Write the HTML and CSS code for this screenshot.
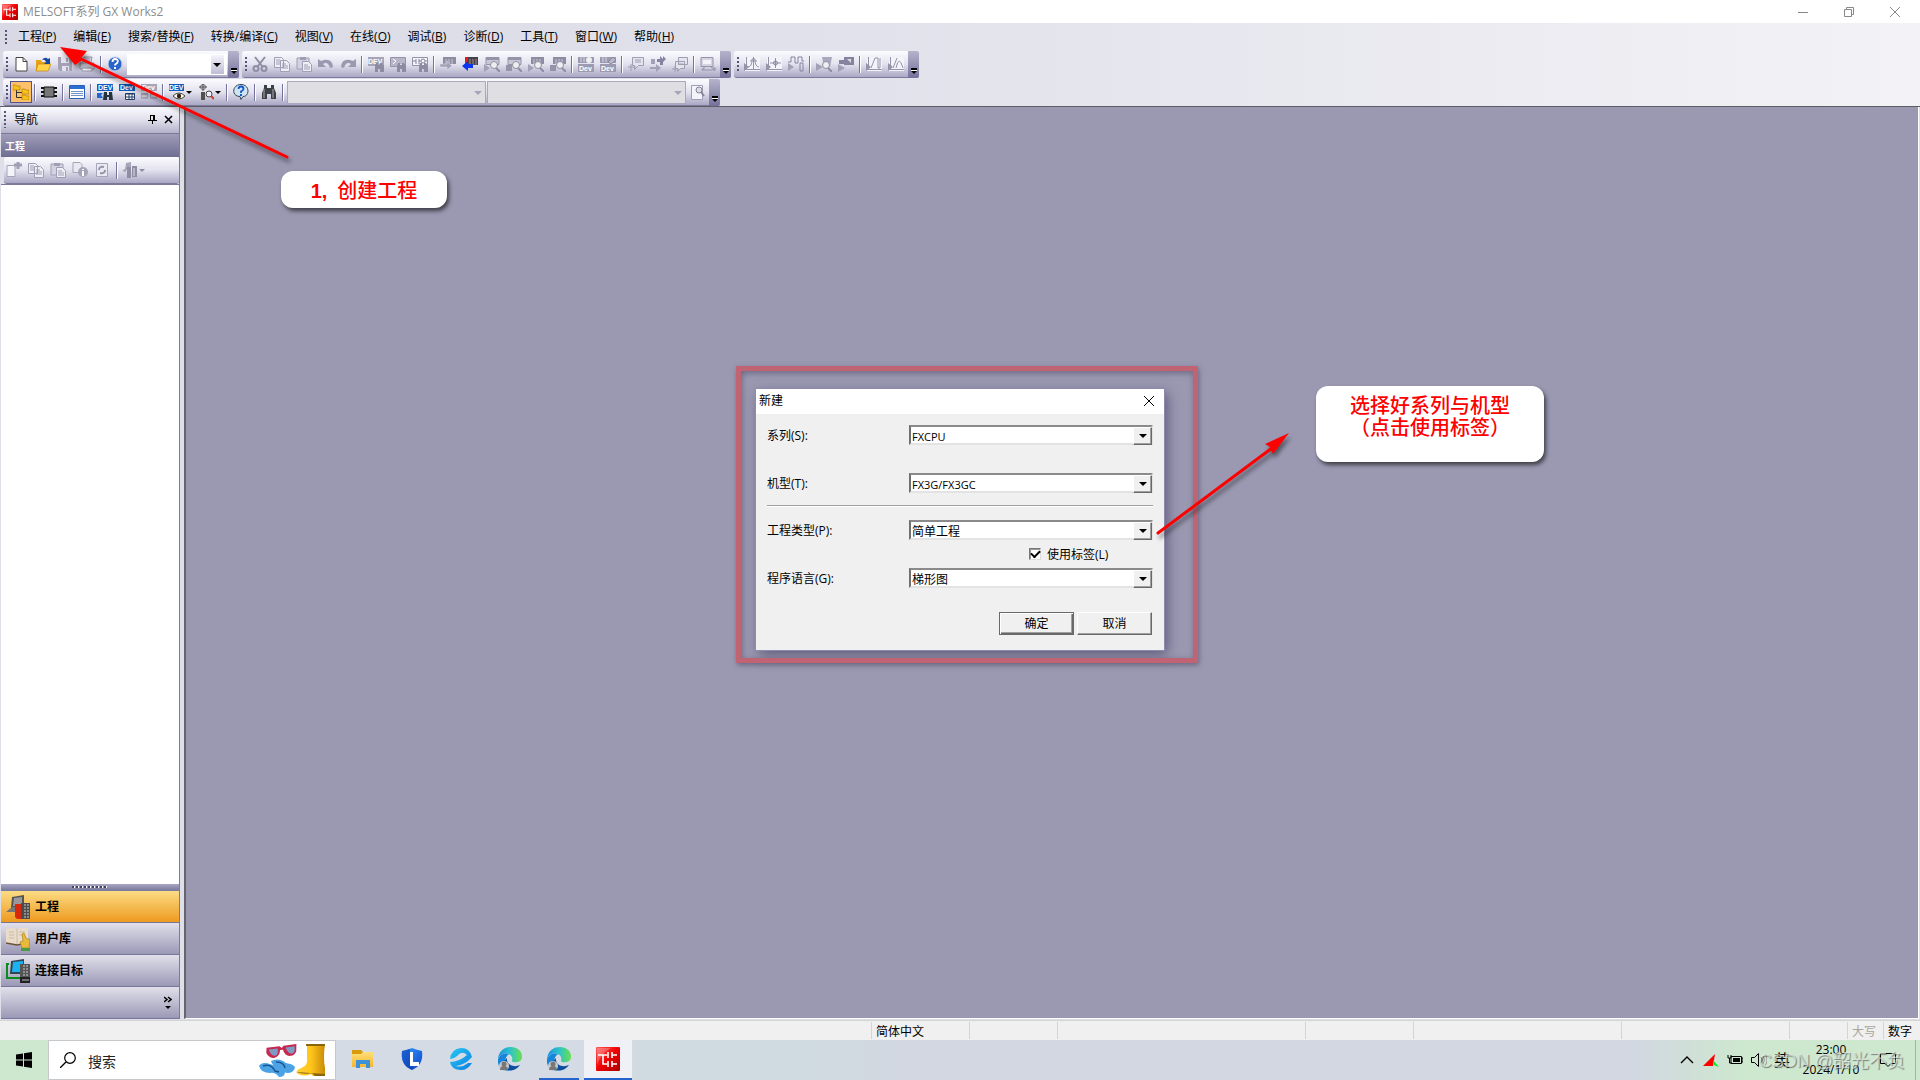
FILE: index.html
```html
<!DOCTYPE html>
<html lang="zh-CN">
<head>
<meta charset="utf-8">
<title>MELSOFT系列 GX Works2</title>
<link rel="stylesheet" href="styles.css">
</head>
<body>
<svg class="defs" aria-hidden="true">
  <defs>
    <linearGradient id="red" x1="0" y1="0" x2="1" y2="1"><stop offset="0" stop-color="#ff5a5a"/><stop offset=".5" stop-color="#f00000"/><stop offset="1" stop-color="#a80000"/></linearGradient>
    <linearGradient id="gold" x1="0" y1="0" x2="0" y2="1"><stop offset="0" stop-color="#ffe07a"/><stop offset="1" stop-color="#f5b52a"/></linearGradient>
    <linearGradient id="blue" x1="0" y1="0" x2="1" y2="1"><stop offset="0" stop-color="#3aa0ff"/><stop offset="1" stop-color="#0a3fc8"/></linearGradient>
    <linearGradient id="cyan" x1="0" y1="0" x2="1" y2="1"><stop offset="0" stop-color="#27c8f5"/><stop offset="1" stop-color="#0e7fe0"/></linearGradient>
    <linearGradient id="edge" x1="0" y1="0" x2="1" y2="0"><stop offset="0" stop-color="#1c8fe0"/><stop offset=".5" stop-color="#2cc3c9"/><stop offset="1" stop-color="#6be04e"/></linearGradient>
    <linearGradient id="boot" x1="0" y1="0" x2="1" y2="0"><stop offset="0" stop-color="#ffd23a"/><stop offset=".5" stop-color="#ffc61a"/><stop offset="1" stop-color="#c98a08"/></linearGradient>
  </defs>
  <symbol id="app" viewBox="0 0 24 24"><rect width="24" height="24" rx="1" fill="url(#red)"/><path d="M1 1h14Q4 7 1 18z" fill="#fff" opacity=".25"/><path d="M2 8h9M7 8v9h4M12 5v6M12 14v6M16 5v6M16 14v6M16 8h5M16 17h5" stroke="#fff" stroke-width="1.600" fill="none"/></symbol>
  <symbol id="new" viewBox="0 0 16 16"><path d="M3 1.500h7l4 4v9.500H3z" fill="#fff" stroke="#444"/><path d="M10 1.500v4h4" fill="none" stroke="#444"/></symbol>
  <symbol id="open" viewBox="0 0 16 16"><path d="M1 4h5l1 2h6v8H1z" fill="#e8a018"/><path d="M3 8h13l-3 7H1z" fill="#ffd24a" stroke="#c98208" stroke-width=".7"/><path d="M7 4q3-4 6-1l2-1v6h-6l2-2q-1-3-4-2z" fill="#174a9c"/></symbol>
  <symbol id="save" viewBox="0 0 16 16"><path d="M1 1h14v14H3l-2-2z" fill="#a3a1b7"/><path d="M4 1h8v6H4zM5 10h7v5H5z" fill="#e3e2ed"/><path d="M9 11h2v4H9zM9 2h2v4H9z" fill="#a3a1b7"/></symbol>
  <symbol id="print" viewBox="0 0 16 16"><path d="M4 6l1-5h8l-1 5M1 7h14v6H1z" fill="#d5d4e0" stroke="#9593aa"/><path d="M3 12h10v3H3zM6 3h5M5 5h6" fill="#eee" stroke="#9593aa"/></symbol>
  <symbol id="help" viewBox="0 0 16 16"><circle cx="8" cy="8" r="7" fill="#2c65c9" stroke="#c5d4ee"/><path d="M5.500 6q0-3 2.700-3t2.600 2.500q0 1.500-2.600 3v1" fill="none" stroke="#fff" stroke-width="1.800"/><path d="M7 11h2v2H7z" fill="#fff"/></symbol>
  <symbol id="cut" viewBox="0 0 16 16"><path d="M3 1l7 9M13 1l-7 9" stroke="#8f8da3" stroke-width="2"/><circle cx="4" cy="12.500" r="2.500" fill="none" stroke="#8f8da3" stroke-width="2"/><circle cx="12" cy="12.500" r="2.500" fill="none" stroke="#8f8da3" stroke-width="2"/></symbol>
  <symbol id="copy" viewBox="0 0 16 16"><path d="M.5 1.500h7l2 2v8h-9zM6.500 4.500h6l3 3v8h-9z" fill="#eeeef5" stroke="#a09eb4"/><path d="M2 4h4M2 6h4M2 8h4M8 8h4M8 10h6M8 12h6" stroke="#a09eb4"/></symbol>
  <symbol id="paste" viewBox="0 0 16 16"><path d="M1 2h12v11H1z" fill="#d3d2df" stroke="#a09eb4"/><path d="M4 1h6v3H4z" fill="#a09eb4"/><path d="M6.500 5.500h6l3 3v7h-9z" fill="#eeeef5" stroke="#a09eb4"/><path d="M8 9h4M8 11h6M8 13h6" stroke="#a09eb4"/></symbol>
  <symbol id="undo" viewBox="0 0 16 16"><path d="M0 3v8h8L5 8q5-3 7 4l3-1Q14 1 3 5z" fill="#9b99b0"/></symbol>
  <symbol id="redo" viewBox="0 0 16 16"><path d="M16 3v8H8l3-3Q6 5 4 12l-3-1Q2 1 13 5z" fill="#9b99b0"/></symbol>
  <symbol id="binos" viewBox="0 0 16 16"><path d="M3 1h3v3h4V1h3v3l2 5v6h-5v-5H6v5H1V9l2-5z" fill="#3c4044"/><path d="M3 5v9M12 5v9" stroke="#a9adb0"/></symbol>
  <symbol id="gbin" viewBox="0 0 16 16"><path d="M8 7h2v2h2V7h2l2 3v6h-4v-3h-2v3H7v-6z" fill="#8d8ba2"/></symbol>
  <symbol id="gfind" viewBox="0 0 16 16"><path d="M0 1h16v9H0z" fill="#a6a4b9"/><text x="0" y="8" class="dev" fill="#fff">DEV</text><use href="#gbin"/></symbol>
  <symbol id="gcmd" viewBox="0 0 16 16"><path d="M.5 1.500h15v9H.5z" fill="#b8b6c8" stroke="#9593aa"/><path d="M3 3l3 2-3 3M8 9h5" stroke="#fff" fill="none"/><use href="#gbin"/></symbol>
  <symbol id="gcontact" viewBox="0 0 16 16"><path d="M.5 1.500h15v8H.5z" fill="#f5f5fa" stroke="#9593aa"/><path d="M1 5h3M4 3v5M7 3v5M7 5h2M15 5h-2" stroke="#8583a0"/><circle cx="11" cy="5" r="2" fill="none" stroke="#8583a0"/><use href="#gbin"/></symbol>
  <symbol id="plc" viewBox="0 0 16 16"><path d="M3 1h13v7H3z" fill="#8e8ca3"/><path d="M6 3v5M9 3v5M12 3v5" stroke="#c9c8d5"/></symbol>
  <symbol id="write" viewBox="0 0 16 16"><use href="#plc"/><path d="M0 8h7V5l5 5-5 4v-3H0z" fill="#a3a1b7" stroke="#e3e2ec" stroke-width=".5"/></symbol>
  <symbol id="read" viewBox="0 0 16 16"><path d="M3 1h13v8H3z" fill="#464049"/><path d="M3 1h3v6H3z" fill="#e21b1b"/><path d="M8 3v6M11 3v6M14 3v6" stroke="#a09090"/><path d="M0 10l6-5v3h5v4H6v3z" fill="#0a36f0"/></symbol>
  <symbol id="lens" viewBox="0 0 16 16"><circle cx="10" cy="9" r="3.500" fill="#eee" stroke="#8f8da4"/><path d="M12 12l4 4" stroke="#8f8da4" stroke-width="2"/></symbol>
  <symbol id="monA" viewBox="0 0 16 16"><path d="M2 1.500h13v7H2z" fill="#c8c7d4" stroke="#9593aa"/><path d="M2 3h13" stroke="#9593aa" stroke-width="2"/><path d="M0 8l6 4-6 4z" fill="#a3a1b7"/><use href="#lens"/></symbol>
  <symbol id="monB" viewBox="0 0 16 16"><path d="M2 1.500h13v7H2z" fill="#c8c7d4" stroke="#9593aa"/><path d="M2 3h13" stroke="#9593aa" stroke-width="2"/><path d="M0 9h6v6H0z" fill="#9593aa"/><use href="#lens"/></symbol>
  <symbol id="monC" viewBox="0 0 16 16"><use href="#plc"/><path d="M0 8l6 4-6 4z" fill="#a3a1b7"/><use href="#lens"/></symbol>
  <symbol id="monD" viewBox="0 0 16 16"><use href="#plc"/><path d="M0 9h6v6H0z" fill="#9593aa"/><use href="#lens"/></symbol>
  <symbol id="devmon" viewBox="0 0 16 16"><path d="M0 1h16v6H0zM0 8h16v8H0z" fill="#9c9ab0"/><path d="M3 1v5M6 1v5" stroke="#d6d5e0"/><circle cx="11" cy="4" r="3" fill="#eee"/><text x="1" y="15" class="dev" fill="#fff">Dev</text></symbol>
  <symbol id="devpen" viewBox="0 0 16 16"><path d="M0 1h16v6H0zM0 8h16v8H0z" fill="#9c9ab0"/><path d="M3 1v5M6 1v5" stroke="#d6d5e0"/><path d="M8 6l5-5 3 3-5 4z" fill="#b9b7c8" stroke="#8886a0"/><text x="1" y="15" class="dev" fill="#fff">Dev</text></symbol>
  <symbol id="note" viewBox="0 0 16 16"><path d="M4.500 1.500h11v8h-5l-4 4v-4h-2z" fill="#e5e4ee" stroke="#9f9db2"/><path d="M7 4h6M7 6h6M0 11h8M3 8v7" stroke="#9f9db2"/></symbol>
  <symbol id="transfer" viewBox="0 0 16 16"><path d="M1 3h4v5H1zM0 11h6V8l5 4-5 4v-3H0z" fill="#a3a1b7"/><path d="M7 3h3V0l3 3V0l3 3-3 3v3h-3V6H7z" fill="#8583a0"/></symbol>
  <symbol id="notes" viewBox="0 0 16 16"><path d="M6.500 1.500h9v7h-9zM3.500 5.500h9v7h-4l-3 3v-3h-2z" fill="#e5e4ee" stroke="#9f9db2"/><path d="M6 8h5M0 13h7M3 10v6" stroke="#9f9db2"/></symbol>
  <symbol id="pc" viewBox="0 0 16 16"><path d="M1 1.500h12v9H1z" fill="#d5d4e0" stroke="#9593aa"/><path d="M3 4h8v4H3z" fill="#f3f3f9"/><path d="M4 11v2H2v1h10M11 11l4 4" stroke="#9593aa" fill="none"/><circle cx="14" cy="13" r="2" fill="#a3a1b7"/></symbol>
  <symbol id="plotA" viewBox="0 0 16 16"><path d="M1 1h15v14H1z" fill="#f3f3fa"/><path d="M2.500 1v13M0 13.500h16M4 11q4 0 4-8h3q0 8 4 8M6 5h7M9.500 1v13" stroke="#9593aa" fill="none"/><path d="M0 7l5 4-5 4z" fill="#9593aa"/></symbol>
  <symbol id="plotB" viewBox="0 0 16 16"><path d="M1 1h15v14H1z" fill="#f3f3fa"/><path d="M2.500 1v13M0 13.500h16M4 7h11M9.500 2v10" stroke="#9593aa"/><circle cx="9.500" cy="7" r="2" fill="none" stroke="#8886a0"/><path d="M0 7l5 4-5 4z" fill="#9593aa"/></symbol>
  <symbol id="pulse" viewBox="0 0 16 16"><path d="M0 6h3V1h4v6h3V1h4v4h2M12 7h3v8h-3z" fill="none" stroke="#8583a0"/><path d="M0 7l6 4-6 4z" fill="#a3a1b7"/></symbol>
  <symbol id="tplc" viewBox="0 0 16 16"><path d="M6 1h10l-2 10H8z" fill="#aaa8bc"/><use href="#lens"/><path d="M0 7l7 4-7 4z" fill="#a3a1b7"/></symbol>
  <symbol id="tmon" viewBox="0 0 16 16"><path d="M6 1h10v8H6zM1 4h6v4H1z" fill="#8583a0"/><path d="M9 3h4v4z" fill="#ddd"/><path d="M0 8l7 4-7 4z" fill="#a3a1b7"/></symbol>
  <symbol id="plotC" viewBox="0 0 16 16"><path d="M1 1h15v14H1z" fill="#f3f3fa"/><path d="M2.500 1v13M0 13.500h16M5 12L9 2h3v10h2V2" stroke="#9593aa" fill="none"/><path d="M0 7l5 4-5 4z" fill="#9593aa"/></symbol>
  <symbol id="plotD" viewBox="0 0 16 16"><path d="M1 1h15v14H1z" fill="#f3f3fa"/><path d="M2.500 1v13M0 13.500h16M5 12L9 2M8 12q3-14 7 0" stroke="#9593aa" fill="none"/><path d="M0 7l5 4-5 4z" fill="#9593aa"/></symbol>
  <symbol id="tree" viewBox="0 0 16 16"><path d="M3.500 5v8.500H9M3.500 8.500H9" fill="none" stroke="#333"/><path d="M0 1h3l1 1h3v4H0zM9 5h3l1 1h3v4H9zM9 11h3l1 1h3v4H9z" fill="#f7c21c" stroke="#a87408" stroke-width=".6"/></symbol>
  <symbol id="chip" viewBox="0 0 16 16"><path d="M3 3h10v10H3z" fill="#777" stroke="#111"/><path d="M0 4h3M0 8h3M0 12h3M13 4h3M13 8h3M13 12h3" stroke="#111" stroke-width="2"/></symbol>
  <symbol id="list" viewBox="0 0 16 16"><path d="M.5 1.500h15v13H.5z" fill="#fff" stroke="#2b60b8"/><path d="M1 2h14v3H1z" fill="#2b6fd0"/><path d="M2 7.500h12M2 9.500h12M2 11.500h12" stroke="#7090c8"/></symbol>
  <symbol id="devfind" viewBox="0 0 16 16"><path d="M0 0h16v7H0z" fill="#0d5cbf"/><text x="1" y="6" class="dev" fill="#fff">DEV</text><path d="M0 9h6l-2 2 2 3H0z" fill="#1f66d0"/><path d="M7 8h3v3h2V8h3l1 8h-4v-3h-2v3H6z" fill="#26333f"/></symbol>
  <symbol id="devtab" viewBox="0 0 16 16"><path d="M0 0h16v7H0z" fill="#0d5cbf"/><text x="1" y="6" class="dev" fill="#fff">Dev</text><path d="M6.500 9.500h9v6h-9z" fill="#fff" stroke="#223a66"/><path d="M7 10h9M7 13h9M10 10v5M13 10v5" stroke="#223a66"/></symbol>
  <symbol id="devoff" viewBox="0 0 16 16"><path d="M0 0h16v7H0zM0 9h7v6H0zM9 9h7v6H9z" fill="#a6a4b9"/><text x="1" y="6" class="dev" fill="#fff">Dev</text><path d="M1 12h5M10 12h5" stroke="#eee"/></symbol>
  <symbol id="deveye" viewBox="0 0 16 16"><path d="M0 0h15v7H0z" fill="#0d5cbf"/><text x="0" y="6" class="dev" fill="#fff">DEV</text><path d="M4 12q6-6 12 0-6 6-12 0z" fill="#fff" stroke="#443"/><circle cx="10" cy="12" r="2.200" fill="#321"/></symbol>
  <symbol id="probe" viewBox="0 0 16 16"><path d="M5 0v7M1 3h8" stroke="#444"/><circle cx="5" cy="3" r="2.500" fill="none" stroke="#666"/><path d="M3 8h4v8H3z" fill="#55504c"/><circle cx="11" cy="10" r="3" fill="#eef" stroke="#444"/><path d="M13 12l3 3" stroke="#d32" stroke-width="2"/></symbol>
  <symbol id="bubble" viewBox="0 0 16 16"><path d="M8 .5c9 0 9 12 2 12l-2 3-1-3c-9 0-8-12 1-12z" fill="#cfe5f6" stroke="#345"/><path d="M5.500 5q0-2.500 2.500-2.500T10.500 5q0 1-2.500 2.500V9" fill="none" stroke="#1559c8" stroke-width="1.800"/><path d="M7 10h2v2H7z" fill="#1559c8"/></symbol>
  <symbol id="pagefind" viewBox="0 0 16 16"><path d="M2.500 1.500h11v14h-11z" fill="#f3f3fa" stroke="#a09eb4"/><circle cx="10" cy="6" r="3" fill="#ddd" stroke="#8583a0"/><path d="M12 8l3 4" stroke="#8583a0" stroke-width="2"/></symbol>
  <symbol id="nnew" viewBox="0 0 16 16"><path d="M1 3.500h8v11H1z" fill="#f3f3fa" stroke="#a6a4b8"/><path d="M8 3h8M12 0v7" stroke="#a09eb4" stroke-width="3"/></symbol>
  <symbol id="ninfo" viewBox="0 0 16 16"><path d="M1 .5h7l2 2v8H1z" fill="#e9e9f2" stroke="#a6a4b8"/><circle cx="11" cy="10" r="5" fill="#a6a4b8"/><path d="M11 7v1M11 9v5" stroke="#fff" stroke-width="2"/></symbol>
  <symbol id="nref" viewBox="0 0 16 16"><path d="M2.500 1.500h11v13h-11z" fill="#e9e9f2" stroke="#a6a4b8"/><path d="M5 8q0-4 5-3M11 8q0 4-5 3" fill="none" stroke="#9593aa" stroke-width="2"/></symbol>
  <symbol id="nsort" viewBox="0 0 16 16"><path d="M4 1l5-1v8H3zM0 9l4-3v4z" fill="#a6a4b9"/><path d="M5 5h4v11H5zM10 4h5v11h-5z" fill="#8f8da4"/><path d="M12 6v8" stroke="#ddd"/></symbol>
  <symbol id="edgei" viewBox="0 0 24 24"><path d="M0 12C1 3 7 0 13 0c8 0 12 6 11 11-1 4-5 5-9 4-2-1 0-2-1-5C12 5 3 5 0 12z" fill="url(#edge)"/><path d="M0 12q4-7 11-5c-7 5-3 14 3 16C5 26-1 20 0 12z" fill="#1685dc"/><path d="M9 11c-1 7 7 10 13 7q-5 7-12 5c-5-4-5-9-1-12z" fill="#0d4f9e"/><circle cx="6" cy="19" r="5" fill="#c9c9c9"/><circle cx="6" cy="17" r="2.500" fill="#777"/><path d="M2 23q0-4 4-4t4 4z" fill="#777"/></symbol>
</svg>

<header class="titlebar">
  <svg class="logo"><use href="#app"/></svg>
  <h1>MELSOFT系列 GX Works2</h1>
  <div class="winbtns">
    <button aria-label="最小化"><svg viewBox="0 0 10 10"><path d="M0 5.500h10"/></svg></button>
    <button aria-label="还原"><svg viewBox="0 0 10 10"><path d="M.5 2.500h7v7h-7zM2.500 2.500v-2h7v7h-2"/></svg></button>
    <button aria-label="关闭"><svg viewBox="0 0 10 10"><path d="M0 0l10 10M10 0L0 10"/></svg></button>
  </div>
</header>

<div class="bars">
  <nav class="menu grip">
    <a href="#">工程(<u>P</u>)</a><a href="#">编辑(<u>E</u>)</a><a href="#">搜索/替换(<u>F</u>)</a><a href="#">转换/编译(<u>C</u>)</a><a href="#">视图(<u>V</u>)</a><a href="#">在线(<u>O</u>)</a><a href="#">调试(<u>B</u>)</a><a href="#">诊断(<u>D</u>)</a><a href="#">工具(<u>T</u>)</a><a href="#">窗口(<u>W</u>)</a><a href="#">帮助(<u>H</u>)</a>
  </nav>
  <div class="toolrow">
    <div class="tools grip">
      <button aria-label="新建"><svg><use href="#new"/></svg></button><button aria-label="打开"><svg><use href="#open"/></svg></button><button aria-label="保存"><svg><use href="#save"/></svg></button><button aria-label="打印"><svg><use href="#print"/></svg></button><i class="sep"></i><button aria-label="帮助"><svg><use href="#help"/></svg></button>
      <span class="tcombo small"><select aria-label="查找"><option></option></select></span>
      <button class="cap" aria-label="更多"></button>
    </div>
    <div class="tools grip">
      <button aria-label="剪切"><svg><use href="#cut"/></svg></button><button aria-label="复制"><svg><use href="#copy"/></svg></button><button aria-label="粘贴"><svg><use href="#paste"/></svg></button><button aria-label="撤销"><svg><use href="#undo"/></svg></button><button aria-label="恢复"><svg><use href="#redo"/></svg></button><i class="sep"></i><button aria-label="软元件搜索"><svg><use href="#gfind"/></svg></button><button aria-label="指令搜索"><svg><use href="#gcmd"/></svg></button><button aria-label="触点搜索"><svg><use href="#gcontact"/></svg></button><i class="sep"></i><button aria-label="写入"><svg><use href="#write"/></svg></button><button aria-label="读取"><svg><use href="#read"/></svg></button><button aria-label="监视开始"><svg><use href="#monA"/></svg></button><button aria-label="监视停止"><svg><use href="#monB"/></svg></button><button aria-label="全部监视开始"><svg><use href="#monC"/></svg></button><button aria-label="全部监视停止"><svg><use href="#monD"/></svg></button><i class="sep"></i><button aria-label="软元件监视"><svg><use href="#devmon"/></svg></button><button aria-label="软元件更改"><svg><use href="#devpen"/></svg></button><i class="sep"></i><button aria-label="注释"><svg><use href="#note"/></svg></button><button aria-label="转换"><svg><use href="#transfer"/></svg></button><button aria-label="声明"><svg><use href="#notes"/></svg></button><i class="sep"></i><button aria-label="模拟"><svg><use href="#pc"/></svg></button>
      <button class="cap" aria-label="更多"></button>
    </div>
    <div class="tools grip">
      <button aria-label="采样跟踪"><svg><use href="#plotA"/></svg></button><button aria-label="触发"><svg><use href="#plotB"/></svg></button><button aria-label="脉冲"><svg><use href="#pulse"/></svg></button><i class="sep"></i><button aria-label="跟踪监视"><svg><use href="#tplc"/></svg></button><button aria-label="跟踪写入"><svg><use href="#tmon"/></svg></button><i class="sep"></i><button aria-label="曲线一"><svg><use href="#plotC"/></svg></button><button aria-label="曲线二"><svg><use href="#plotD"/></svg></button>
      <button class="cap" aria-label="更多"></button>
    </div>
  </div>
  <div class="toolrow">
    <div class="tools grip">
      <button class="on" aria-label="导航"><svg><use href="#tree"/></svg></button><i class="sep"></i><button aria-label="模块"><svg><use href="#chip"/></svg></button><i class="sep"></i><button aria-label="输出"><svg><use href="#list"/></svg></button><i class="sep"></i><button aria-label="交叉参照"><svg><use href="#devfind"/></svg></button><button aria-label="使用列表"><svg><use href="#devtab"/></svg></button><button aria-label="软元件表"><svg><use href="#devoff"/></svg></button><i class="sep"></i><button class="drop" aria-label="监看"><svg><use href="#deveye"/></svg></button><button class="drop" aria-label="智能模块监视"><svg><use href="#probe"/></svg></button><i class="sep"></i><button aria-label="帮助搜索"><svg><use href="#bubble"/></svg></button><i class="sep"></i><button aria-label="查找"><svg><use href="#binos"/></svg></button><i class="sep"></i>
      <span class="tcombo off"><select aria-label="对象" disabled><option></option></select></span>
      <span class="tcombo off"><select aria-label="范围" disabled><option></option></select></span>
      <button aria-label="页面查找"><svg><use href="#pagefind"/></svg></button>
      <button class="cap" aria-label="更多"></button>
    </div>
  </div>
</div>

<main class="work">
  <aside class="nav">
    <div class="navhead grip"><h2>导航</h2>
      <button aria-label="固定"><svg viewBox="0 0 9 9"><path d="M2 .5h5M2.500 0v5M5.500 0v5M6.500 0v5M0 5.500h9M4.500 6v3"/></svg></button>
      <button aria-label="关闭"><svg viewBox="0 0 9 9"><path d="M1 1l7 7M8 1L1 8" stroke-width="1.500"/></svg></button>
    </div>
    <h3>工程</h3>
    <div class="tools navtools">
      <button aria-label="新建"><svg><use href="#nnew"/></svg></button><button aria-label="复制"><svg><use href="#copy"/></svg></button><button aria-label="粘贴"><svg><use href="#paste"/></svg></button><button aria-label="属性"><svg><use href="#ninfo"/></svg></button><button aria-label="刷新"><svg><use href="#nref"/></svg></button><i class="sep"></i><button class="drop" aria-label="排序"><svg><use href="#nsort"/></svg></button>
    </div>
    <div class="treeview"></div>
    <div class="splitter"></div>
    <button class="navitem active"><svg viewBox="0 0 24 24"><path d="M6 2l12-2v13H5z" fill="#555"/><path d="M8 3l8-1v9H7z" fill="#999"/><path d="M0 17l6-5h8v5z" fill="#777"/><path d="M9 9h6v15h-4l-2-2z" fill="#d8290c"/><path d="M15 8h9v16h-9z" fill="#4c4c4c"/><path d="M19 9v14M22 9v14" stroke="#ccc" stroke-dasharray="2 1"/></svg>工程</button>
    <button class="navitem"><svg viewBox="0 0 24 24"><path d="M0 2q6-2 11 0 5-2 11-1v15l-11 2-11-2z" fill="#e9dccb"/><path d="M0 16l11 2 11-2" fill="none" stroke="#6b5337" stroke-width="1.500"/><path d="M11 2v15M3 5h5M3 8h5M3 11h5M13 5h6M13 8h4" stroke="#cdb9a5"/><path d="M16 7l2-1 2 5 4 2-1 8h-7l-2-6 3-1z" fill="#e8b93a" stroke="#a17a12" stroke-width=".6"/><path d="M15 21h9v3h-9z" fill="#4a9a4a"/></svg>用户库</button>
    <button class="navitem"><svg viewBox="0 0 24 24"><path d="M3 5H1v14h14" fill="none" stroke="#0c8a1a" stroke-width="2"/><path d="M5 2l13-2v15H4z" fill="#345"/><path d="M7 3l10-1v11H6z" fill="#1ab4f0"/><path d="M14 5h10v14H14z" fill="#555"/><path d="M18 6v11M21 6v11" stroke="#ccc" stroke-dasharray="2 1"/><path d="M14 18h10v6H14z" fill="#222"/><path d="M16 21h7" stroke="#bbb"/></svg>连接目标</button>
    <div class="navmore"><button aria-label="配置按钮"><svg viewBox="0 0 8 14"><path d="M0 1l3 2.500L0 6M4 1l3 2.500L4 6" fill="none" stroke="#000" stroke-width="1.500"/><path d="M1 10h6l-3 3z"/></svg></button></div>
  </aside>
  <section class="mdi" aria-label="工作区"></section>
</main>

<footer class="status">
  <span class="fill"></span><span class="c98">简体中文</span><span class="c88"></span><span class="c248"></span><span class="c108"></span><span class="c208"></span><span class="c168"></span><span class="c58"></span><span class="c36 dim">大写</span><span class="c37">数字</span>
</footer>

<div class="taskbar">
  <button class="start" aria-label="开始"><svg viewBox="0 0 16 16"><path d="M0 2.500l7-1v6H0zM8 1.300L16 0v7.500H8zM0 8.500h7v6l-7-1zM8 8.500h8V16l-8-1.300z"/></svg></button>
  <label class="search"><svg class="mag" viewBox="0 0 16 16"><circle cx="10" cy="6" r="5.300" fill="none" stroke="#000" stroke-width="1.200"/><path d="M6 10l-6 6" stroke="#000" stroke-width="1.300"/></svg><input type="text" placeholder="搜索" aria-label="搜索">
    <svg class="art" viewBox="0 0 68 36"><g transform="rotate(-7 22 8)"><path d="M8 4h13l2 2 2-2h13l-1 7q-2 4-6 4-6 0-7-7h-3q-1 7-7 7-5 0-7-6z" fill="#c72850"/><path d="M10 6h9q0 7-4 7-4-1-5-7zM27 6h9q0 7-4 7-4-1-5-7z" fill="#7f9bc4"/></g><path d="M0 24q3-5 11-2 10 3 15 8 0 5-6 5-4-5-9-4Q2 31 0 24zM12 19q8-4 15 2 7 1 9 4-1 6-8 6-6-1-8-5-7-2-8-7z" fill="#4ba3e6"/><path d="M4 24q8-3 12 5l4 1M17 20q8 0 9 6" fill="none" stroke="#17548f" stroke-width="1.500"/><path d="M48 2h18q-2 14 0 24v8H54l-2-2q-7 3-13 0-4-3 3-6 7-3 6-8z" fill="url(#boot)"/><path d="M47 2h19v2H47zM37 30q8 3 16 1l3 3h10v-2" fill="#8a6510"/></svg>
  </label>
  <div class="apps">
    <button aria-label="文件资源管理器"><svg viewBox="0 0 24 24"><path d="M1 3h9l2 2v4H1z" fill="#d99a0b"/><path d="M1 7h9l2-2h10v15H1z" fill="url(#gold)"/><path d="M5 21v-8h14v8h-4v-4H9v4z" fill="#3b92d8"/></svg></button>
    <button aria-label="联想电脑管家"><svg viewBox="0 0 24 24"><path d="M12 1q5 2 10 3 2 14-10 19Q0 18 2 4q5-1 10-3z" fill="url(#blue)"/><path d="M2 4l8-2v16l4 3-2 2Q0 18 2 4z" fill="#0b3bb0" opacity=".6"/><path d="M10 5h3v10h6v4h-9z" fill="#fff"/></svg></button>
    <button aria-label="浏览器"><svg viewBox="0 0 24 24"><path d="M1 12Q2 2 12 1q9 0 11 9-7 8-16 9 6 2 12-3h4q-5 8-12 7Q2 22 1 15q9 0 17-7-5-5-10 1-3 3-7 3z" fill="url(#cyan)"/></svg></button>
    <button aria-label="Edge"><svg><use href="#edgei"/></svg></button>
    <button class="run" aria-label="Edge 窗口"><svg><use href="#edgei"/></svg></button>
    <button class="cur" aria-label="GX Works2"><svg><use href="#app"/></svg></button>
  </div>
  <div class="tray">
    <button aria-label="显示隐藏的图标"><svg viewBox="0 0 16 16"><path d="M2 11l6-6 6 6" fill="none" stroke="#000" stroke-width="1.400"/></svg></button>
    <button aria-label="安全软件"><svg viewBox="0 0 16 16"><path d="M0 14L12 2 10 14z" fill="#f00"/><path d="M10 8l6 7-5-2z" fill="#0e2"/></svg></button>
    <button aria-label="电池"><svg viewBox="0 0 16 16"><path d="M4 4.500h10.500v7H4zM14 6h2v4h-2M1 3v3h3V3M2.500 6v5H5" fill="none" stroke="#000"/><path d="M6 6h7v4H6z"/></svg></button>
    <button aria-label="音量"><svg viewBox="0 0 16 16"><path d="M.5 5.500h3l4-4v13l-4-4h-3zM10 5q2 3 0 6" fill="none" stroke="#000"/><path d="M12 4q3 4 0 8M14 2q4 6 0 12" fill="none" stroke="#999"/></svg></button>
    <button class="ime">英</button>
    <time class="clock"><span>23:00</span><span>2024/1/10</span></time>
    <button class="notice" aria-label="通知"><svg viewBox="0 0 16 16"><path d="M.5 1.500h15v10H11l-3 3-3-3H.5z" fill="none" stroke="#000"/></svg></button>
    <span class="mark">CSDN @韶光不负</span>
  </div>
</div>

<div class="hint">
  <svg class="arrow1" viewBox="0 0 240 130"><path d="M27 19L235 118" stroke="#f00" stroke-width="3" stroke-linecap="round"/><path d="M8 8l27 4-5 6-1 4-6 4z" fill="#f00"/></svg>
  <p class="callout first"><b>1,</b>&ensp;创建工程</p>
</div>

<div class="stage">
  <form class="dialog">
    <header><h2>新建</h2><button type="button" aria-label="关闭"><svg viewBox="0 0 10 10"><path d="M0 0l10 10M10 0L0 10" stroke="#000"/></svg></button></header>
    <div class="row"><label for="series">系列(S):</label><span class="combo"><select id="series" class="latin"><option>FXCPU</option></select></span></div>
    <div class="row second"><label for="model">机型(T):</label><span class="combo"><select id="model" class="latin"><option>FX3G/FX3GC</option></select></span></div>
    <hr>
    <div class="row"><label for="ptype">工程类型(P):</label><span class="combo"><select id="ptype"><option>简单工程</option></select></span></div>
    <div class="check"><input type="checkbox" id="tag" checked><label for="tag">使用标签(L)</label></div>
    <div class="row"><label for="lang">程序语言(G):</label><span class="combo"><select id="lang"><option>梯形图</option></select></span></div>
    <div class="actions"><button type="button" class="ok">确定</button><button type="button">取消</button></div>
  </form>
  <div class="frame"></div>
  <svg class="arrow2" viewBox="0 0 150 120"><path d="M8 113L122 28" stroke="#f00" stroke-width="3" stroke-linecap="round"/><path d="M139 13l-24 11 5 3v1l3 6z" fill="#f00"/></svg>
  <p class="callout second">选择好系列与机型<br>（点击使用标签）</p>
</div>
</body>
</html>
```
FILE: styles.css
```css
* { box-sizing: border-box; margin: 0; }
body {
  height: 100vh; display: flex; flex-direction: column; position: relative; overflow: hidden;
  font: 12px/16px "Open Sans", "Noto Sans CJK SC", sans-serif; color: #000; background: #dcdce8;
}
button, select, input { font: inherit; color: inherit; padding: 0; border: 0; background: none; }
button { display: flex; align-items: center; justify-content: center; }
h1, h2, h3 { font-size: 12px; font-weight: 400; }
.defs { position: absolute; width: 0; height: 0; }
symbol { overflow: visible; }
.dev { font: bold 7px "Liberation Sans", sans-serif; }

.titlebar { display: flex; align-items: center; height: 23px; padding: 0 2px; gap: 5px; background: #fff; color: #8c8c8c; }
.logo { width: 16px; height: 16px; }
.winbtns { display: flex; margin-left: auto; }
.winbtns button { width: 46px; height: 22px; }
.winbtns svg { width: 10px; height: 10px; fill: none; stroke: #888; }

.bars { background: linear-gradient(90deg, #d9d9e6, #e3e3ec 50%, #f3f2f6); border-bottom: 1px solid #5e5d66; }
.grip::before {
  content: ""; width: 2px; height: 15px; margin: 0 2px 0 3px; flex: none;
  background: repeating-linear-gradient(#55537a 0 2px, transparent 2px 4px);
}
.menu { display: flex; align-items: center; height: 28px; gap: 17px; padding: 0 2px; }
.menu::before { margin-right: -6px; }
.menu a { color: #000; text-decoration: none; white-space: nowrap; }
.toolrow { display: flex; gap: 3px; padding-left: 3px; height: 28px; }
.toolrow:last-child { height: 27px; }
.tools {
  display: flex; align-items: center; height: 27px; border-radius: 3px;
  background: linear-gradient(#fbfbff, #e3e2ee 50%, #a9a7c4); border-bottom: 1px solid #7c7a9a;
}
.tools button { width: 22px; height: 22px; flex: none; }
.tools svg { width: 16px; height: 16px; }
.tools .on { background: #fdc06b; border: 1px solid #555389; }
.tools .drop { width: 29px; padding-left: 3px; justify-content: flex-start; }
.drop::after { content: ""; border: 3px solid transparent; border-top-color: currentColor; border-bottom: 0; margin-left: 1px; }
.sep { width: 6px; height: 17px; flex: none; background: linear-gradient(90deg, transparent 2px, #75739a 2px 3px, #fff 3px 4px, transparent 4px); }
.tools .cap {
  position: relative; width: 11px; height: 27px; margin: 0 0 -1px 1px; border-radius: 0 2px 2px 0;
  background: linear-gradient(#b5b3cb, #74729a);
}
.cap::before { content: ""; position: absolute; left: 3px; top: 17px; width: 6px; height: 2px; background: #000; border-bottom: 1px solid #fff; }
.cap::after { content: ""; position: absolute; left: 3px; top: 20px; border: 3px solid transparent; border-top-color: #000; border-bottom: 0; }
.tcombo { position: relative; display: block; height: 21px; width: 100px; margin-left: 1px; background: #fff; }
.tcombo select { appearance: none; width: 100%; height: 100%; }
.tcombo::after { content: ""; position: absolute; right: 7px; top: 9px; border: 4px solid transparent; border-top-color: #000; border-bottom: 0; pointer-events: none; }
.small::before { content: ""; position: absolute; right: 3px; top: 1px; width: 13px; height: 19px; background: linear-gradient(#f4f4fa, #bfbdd3); pointer-events: none; }
.small::after { right: 6px; }
.off { width: 199px; height: 23px; background: #dfdee3; border: 1px solid #aaa8bc; }
.off::after { right: 3px; border-top-color: #a5a3b6; }

.work { flex: 1; min-height: 0; display: flex; gap: 4px; padding: 0 1px 1px; background: #dfdfe9; }
.nav { width: 179px; display: flex; flex-direction: column; border-right: 1px solid #7c7a9a; }
.navhead { display: flex; align-items: center; height: 26px; gap: 7px; padding: 0 6px 1px 0; background: linear-gradient(#fafaff, #e0dfeb 50%, #b3b1ca); }
.navhead::before { height: 17px; margin-right: 1px; }
.navhead h2 { margin-right: auto; }
.navhead svg { width: 9px; height: 9px; fill: none; stroke: #000; }
.nav h3 { height: 24px; padding-left: 4px; line-height: 24px; font-size: 10px; font-weight: 700; color: #fff; background: linear-gradient(#9f9db8, #6f6d92); border-top: 1px solid #7c7a9a; }
.navtools { margin-left: 3px; height: 27px; color: #8f8da4; }
.navtools button { margin-left: -1px; margin-right: 1px; }
.treeview { flex: 1; background: #fff; border-top: 1px solid #7c7a9a; }
.splitter { height: 7px; background: repeating-linear-gradient(90deg, #444266 0 2px, #fff 2px 3px, transparent 3px 4px) center 2px / 36px 2px no-repeat, linear-gradient(#a9a7c2, #77759a); }
.navitem { height: 32px; gap: 5px; padding-left: 5px; justify-content: flex-start; font-weight: 700; border-bottom: 1px solid #77759a; background: linear-gradient(#e1e0ea, #9b99b6); }
.navitem svg { width: 24px; height: 24px; }
.active { background: linear-gradient(#fbdc84, #ee9a20); }
.navmore { height: 32px; display: flex; justify-content: flex-end; align-items: center; padding-right: 7px; background: linear-gradient(#e1e0ea, #9b99b6); border-bottom: 1px solid #77759a; }
.navmore svg { width: 8px; height: 14px; }
.mdi { flex: 1; background: #9b99b2; border-left: 2px solid #66656e; border-bottom: 1px solid #fff; border-right: 1px solid #fff; }

.status { display: flex; height: 20px; padding-top: 1px; padding-bottom: 1px; background: #f0f0f0; border-top: 1px solid #d4d4d4; line-height: 19px; }
.status span { border-left: 1px solid #d4d4d4; padding-left: 4px; flex: none; white-space: nowrap; }
.status .fill { flex: 1; border: 0; }
.c98 { width: 98px; } .c88 { width: 88px; } .c248 { width: 248px; } .c108 { width: 108px; } .c208 { width: 208px; }
.c168 { width: 168px; } .c58 { width: 58px; } .c36 { width: 36px; } .c37 { width: 37px; }
.status .dim { color: #a9a59b; }

.taskbar { display: flex; height: 40px; flex: none; background: linear-gradient(90deg, #cde8cf 0 48px, #d5dbe5 300px 600px, #cfdbe0 650px 800px, #d2d7e1 900px 85%, #cde8cf 91%); }
.start { width: 48px; }
.start svg { width: 16px; height: 16px; }
.search { display: flex; align-items: center; width: 288px; gap: 12px; padding: 0 8px 0 11px; background: #fff; border: 1px solid #c5c9cc; }
.mag { width: 16px; height: 16px; flex: none; }
.search input { flex: 1; min-width: 0; height: 24px; padding-top: 2px; font-size: 14px; outline: 0; }
.search input::placeholder { color: #222; }
.art { width: 68px; height: 36px; flex: none; }
.apps { display: flex; gap: 1px; padding-left: 3px; }
.apps button { width: 48px; border-bottom: 2px solid transparent; }
.apps svg { width: 24px; height: 24px; }
.apps .run { width: 40px; margin: 0 4px; border-color: #2464cc; }
.apps .cur { background: #eff1f6; border-color: #2464cc; }
.tray { position: relative; display: flex; margin-left: auto; margin-right: 4px; padding-right: 8px; border-right: 1px solid #a0b5a2; }
.tray button { width: 24px; }
.tray svg { width: 16px; height: 16px; }
.tray .ime { width: 22px; font-size: 16px; }
.clock { display: flex; flex-direction: column; width: 76px; text-align: center; line-height: 20px; }
.mark { position: absolute; right: 10px; top: 7px; font: 18px/28px "Liberation Sans", "Noto Sans CJK SC", sans-serif; white-space: nowrap; color: rgba(235, 240, 235, .65); text-shadow: 1px 1px 1px rgba(60, 60, 60, .6); pointer-events: none; }
.tray .notice { width: 38px; }

.hint { position: absolute; left: 52px; top: 39px; pointer-events: none; }
.arrow1, .arrow2 { position: absolute; filter: drop-shadow(2px 4px 2px rgba(0, 0, 0, .45)); pointer-events: none; }
.arrow1 { left: 0; top: 0; width: 240px; height: 130px; }
.callout { position: absolute; border-radius: 12px; background: #fff; color: #f00; font: 500 20px/22px "Liberation Sans", "Noto Sans CJK SC", sans-serif; text-align: center; white-space: nowrap; box-shadow: 2px 3px 4px rgba(0, 0, 0, .6); }
.callout.first { left: 229px; top: 132px; width: 166px; padding: 9px 0 6px; }
.stage { position: absolute; left: 50%; top: 50%; margin: -151px 0 0 -204px; }
.callout.second { left: 560px; top: -3px; width: 228px; padding: 9px 0 23px; }
.frame { position: absolute; left: -20px; top: -23px; width: 462px; height: 297px; border: 5px solid #c06474; box-shadow: 1px 2px 5px rgba(60, 50, 80, .5), inset 1px 2px 6px rgba(60, 50, 80, .5); pointer-events: none; }
.arrow2 { left: 394px; top: 31px; width: 150px; height: 120px; }

.dialog { width: 408px; padding-bottom: 15px; background: #f0f0f0; box-shadow: 0 0 0 1px #8d8bad, 3px 4px 12px rgba(30, 20, 60, .5); }
.dialog header { display: flex; justify-content: space-between; align-items: center; height: 25px; padding: 0 10px 2px 3px; margin-bottom: 11px; background: #fff; }
.dialog header svg { width: 10px; height: 10px; }
.row { display: flex; align-items: center; justify-content: space-between; height: 20px; margin: 0 11px; }
.row.second { margin-top: 28px; }
.row label, .check label { padding-top: 2px; }
.dialog hr { height: 2px; border: 0; border-top: 1px solid #a0a0a0; background: #fff; margin: 12px 11px 13px; }
.combo { position: relative; width: 244px; height: 20px; }
.combo select { appearance: none; display: block; width: 100%; height: 100%; padding: 2px 0 0 1px; border: 2px solid; border-color: #8a8a8a #e3e3e3 #e3e3e3 #707070; background: #fff; border-radius: 0; }
.combo .latin { font-size: 11px; }
.combo::before { content: ""; position: absolute; right: 1px; top: 2px; width: 17px; height: 16px; background: #f0f0f0; border: 1px solid; border-color: #fff #696969 #696969 #fff; box-shadow: inset -1px -1px #a0a0a0; pointer-events: none; }
.combo::after { content: ""; position: absolute; right: 6px; top: 9px; border: 4px solid transparent; border-top-color: #000; border-bottom: 0; pointer-events: none; }
.check { display: flex; align-items: center; height: 28px; gap: 6px; margin-left: 273px; }
.check input { appearance: none; width: 12px; height: 12px; background: #fff; border: 1px solid; border-color: #777 #ddd #ddd #777; box-shadow: inset 1px 1px #999; display: grid; place-items: center; }
.check input:checked::before { content: ""; width: 7px; height: 4px; border: solid #000; border-width: 0 0 2px 2px; transform: rotate(-45deg); margin-top: -2px; }
.actions { display: flex; justify-content: flex-end; gap: 3px; margin: 24px 12px 0; }
.actions button { width: 75px; height: 23px; border: 1px solid; border-color: #fff #696969 #696969 #fff; box-shadow: inset -1px -1px #a0a0a0; }
.actions .ok { border-color: #696969; box-shadow: inset 1px 1px #fff, inset -1px -1px #696969, inset -2px -2px #a0a0a0; }
```
